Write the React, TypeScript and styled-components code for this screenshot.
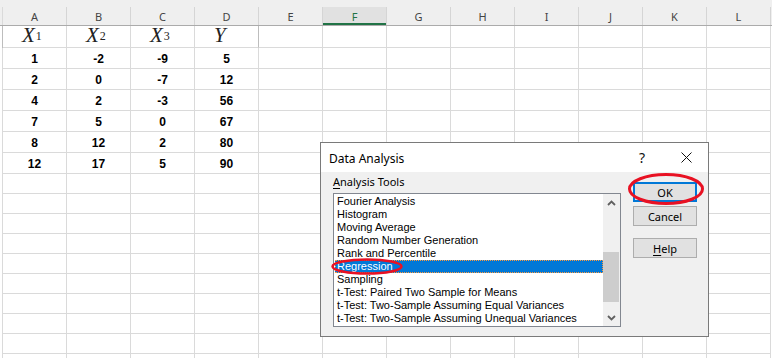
import React from "react";
import styled, { createGlobalStyle, css } from "styled-components";

const Global = createGlobalStyle`
  html, body { margin: 0; padding: 0; background: #ffffff; overflow: hidden; }
  #root { width: 772px; height: 358px; }
`;

const UI = `"Noto Sans", "Open Sans", "Liberation Sans", sans-serif`;
const LIST = `"Liberation Sans", Arial, sans-serif`;
const GRID = "#dadada";

const Sheet = styled.div`
  position: relative;
  width: 772px;
  height: 358px;
  overflow: hidden;
  background: #ffffff;
  font-family: ${UI};
`;

const TopStrip = styled.div`
  height: 7px;
  background: #efefef;
`;

const HeaderRow = styled.div`
  display: flex;
  height: 19px;
  background: #efefef;
  border-bottom: 1px solid #ababab;
  box-sizing: border-box;
`;

const Stub = styled.div<{ $dark?: boolean }>`
  flex: 0 0 3px;
  box-sizing: border-box;
  border-right: 1px solid ${(p) => (p.$dark ? "#bdbdbd" : GRID)};
`;

const ColHeader = styled.div<{ $selected?: boolean }>`
  flex: 0 0 64px;
  box-sizing: border-box;
  display: flex;
  align-items: center;
  justify-content: center;
  border-right: 1px solid #d5d5d5;
  font-size: 11px;
  color: #444444;
  ${(p) =>
    p.$selected &&
    css`
      background: #e1e1e1;
      color: #217346;
      box-shadow: inset 0 -2px 0 #217346;
    `}
`;

const Filler = styled.div`
  flex: 1;
`;

const Row = styled.div<{ $h: number }>`
  display: flex;
  height: ${(p) => p.$h}px;
`;

const Cell = styled.div<{ $dark?: boolean }>`
  flex: 0 0 64px;
  box-sizing: border-box;
  border-right: 1px solid ${(p) => (p.$dark ? "#bdbdbd" : GRID)};
  border-bottom: 1px solid ${GRID};
  display: flex;
  align-items: center;
  justify-content: center;
`;

const NumCell = styled(Cell)`
  font-family: "Liberation Sans", Arial, sans-serif;
  font-weight: bold;
  font-size: 12px;
  color: #000000;
  padding-top: 1px;
`;

const MathCell = styled(Cell)`
  justify-content: flex-start;
  padding-left: 19px;
  padding-bottom: 2px;
  font-family: "Liberation Serif", "Times New Roman", serif;
  font-style: italic;
  font-size: 21px;
  color: #222222;
  line-height: 1;
  sub {
    font-style: normal;
    font-size: 12px;
    line-height: 1;
    vertical-align: -2px;
    margin-left: 1px;
  }
`;

/* ---------- Dialog ---------- */

const Dialog = styled.div`
  position: absolute;
  left: 320px;
  top: 142px;
  width: 389px;
  height: 195px;
  box-sizing: border-box;
  border: 1px solid #7a7a7a;
  background: #f0f0f0;
  display: flex;
  flex-direction: column;
  font-family: ${UI};
`;

const TitleBar = styled.div`
  height: 29px;
  background: #ffffff;
  display: flex;
  align-items: center;
  padding-left: 8px;
  font-size: 12px;
  color: #000000;
`;

const Title = styled.div`
  flex: 1;
  padding-top: 1px;
`;

const TitleBtn = styled.div`
  width: 44px;
  height: 29px;
  display: flex;
  align-items: center;
  justify-content: center;
  font-size: 14px;
  color: #111111;
`;

const Body = styled.div`
  flex: 1;
  display: flex;
  padding: 0 10px 0 12px;
`;

const LeftCol = styled.div`
  width: 288px;
  display: flex;
  flex-direction: column;
  padding-top: 2px;
`;

const Label = styled.div`
  font-size: 11px;
  line-height: 15px;
  height: 15px;
  color: #000000;
  u { text-decoration: underline; text-underline-offset: 2px; }
`;

const ListBox = styled.div`
  margin-top: 4px;
  height: 134px;
  box-sizing: border-box;
  border: 1px solid #828790;
  background: #ffffff;
  display: flex;
`;

const Items = styled.div`
  flex: 1;
  padding-top: 1px;
  display: flex;
  flex-direction: column;
`;

const Item = styled.div<{ $selected?: boolean }>`
  height: 13px;
  line-height: 13px;
  font-family: ${LIST};
  font-size: 11px;
  padding-left: 2px;
  margin-left: 1px;
  white-space: nowrap;
  color: #000000;
  box-sizing: border-box;
  ${(p) =>
    p.$selected &&
    css`
      background: #0078d7;
      color: #ffffff;
      outline: 1px dotted #ff9a3c;
      outline-offset: -1px;
    `}
`;

const ScrollBar = styled.div`
  width: 17px;
  background: #f0f0f0;
  display: flex;
  flex-direction: column;
`;

const ScrollArrow = styled.div`
  height: 17px;
  display: flex;
  align-items: center;
  justify-content: center;
`;

const Track = styled.div`
  flex: 1;
  position: relative;
`;

const Thumb = styled.div<{ $top: number; $h: number }>`
  position: absolute;
  left: 0;
  right: 1px;
  top: ${(p) => p.$top}px;
  height: ${(p) => p.$h}px;
  background: #cdcdcd;
`;

const RightCol = styled.div`
  margin-left: 12px;
  padding-top: 10px;
  display: flex;
  flex-direction: column;
`;

const Button = styled.div<{ $default?: boolean; $gap?: number }>`
  width: 64px;
  height: 20px;
  box-sizing: border-box;
  margin-top: ${(p) => p.$gap ?? 0}px;
  background: #e1e1e1;
  border: 1px solid ${(p) => (p.$default ? "#0078d7" : "#adadad")};
  ${(p) => p.$default && css`box-shadow: inset 0 0 0 1px #0078d7;`}
  display: flex;
  align-items: center;
  justify-content: center;
  font-size: 11px;
  color: #000000;
  u { text-decoration: underline; text-underline-offset: 2px; }
`;

const Annotation = styled.svg<{ $x: number; $y: number }>`
  position: absolute;
  left: ${(p) => p.$x}px;
  top: ${(p) => p.$y}px;
  overflow: visible;
`;

const cols = ["A", "B", "C", "D", "E", "F", "G", "H", "I", "J", "K", "L"];
const data = [
  [1, -2, -9, 5],
  [2, 0, -7, 12],
  [4, 2, -3, 56],
  [7, 5, 0, 67],
  [8, 12, 2, 80],
  [12, 17, 5, 90],
];

const tools = [
  "Fourier Analysis",
  "Histogram",
  "Moving Average",
  "Random Number Generation",
  "Rank and Percentile",
  "Regression",
  "Sampling",
  "t-Test: Paired Two Sample for Means",
  "t-Test: Two-Sample Assuming Equal Variances",
  "t-Test: Two-Sample Assuming Unequal Variances",
];

const Chevron = ({ down }: { down?: boolean }) => (
  <svg width="9" height="6" viewBox="0 0 9 6">
    <path
      d={down ? "M1 1 L4.5 4.5 L8 1" : "M1 5 L4.5 1.5 L8 5"}
      fill="none"
      stroke="#606060"
      strokeWidth="1.8"
    />
  </svg>
);

const CloseIcon = () => (
  <svg width="11" height="11" viewBox="0 0 11 11">
    <path d="M0.5 0.5 L10.5 10.5 M10.5 0.5 L0.5 10.5" stroke="#111" strokeWidth="1" />
  </svg>
);

export default function App() {
  const emptyRows = Array.from({ length: 10 });
  return (
    <>
      <Global />
      <Sheet>
        <TopStrip />
        <HeaderRow>
          <Stub />
          {cols.map((c) => (
            <ColHeader key={c} $selected={c === "F"}>
              {c}
            </ColHeader>
          ))}
          <Filler />
        </HeaderRow>
        <Row $h={22}>
          <Stub $dark />
          <MathCell>
            X<sub>1</sub>
          </MathCell>
          <MathCell>
            X<sub>2</sub>
          </MathCell>
          <MathCell>
            X<sub>3</sub>
          </MathCell>
          <MathCell $dark>Y</MathCell>
          {cols.slice(4).map((c) => (
            <Cell key={c} />
          ))}
          <Filler />
        </Row>
        {data.map((r, i) => (
          <Row $h={21} key={i}>
            <Stub />
            {r.map((v, j) => (
              <NumCell key={j}>{v}</NumCell>
            ))}
            {cols.slice(4).map((c) => (
              <Cell key={c} />
            ))}
            <Filler />
          </Row>
        ))}
        {emptyRows.map((_, i) => (
          <Row $h={20} key={"e" + i}>
            <Stub />
            {cols.map((c) => (
              <Cell key={c} />
            ))}
            <Filler />
          </Row>
        ))}

        <Dialog>
          <TitleBar>
            <Title>Data Analysis</Title>
            <TitleBtn>?</TitleBtn>
            <TitleBtn>
              <CloseIcon />
            </TitleBtn>
          </TitleBar>
          <Body>
            <LeftCol>
              <Label>
                <u>A</u>nalysis Tools
              </Label>
              <ListBox>
                <Items>
                  {tools.map((t) => (
                    <Item key={t} $selected={t === "Regression"}>
                      {t}
                    </Item>
                  ))}
                </Items>
                <ScrollBar>
                  <ScrollArrow>
                    <Chevron />
                  </ScrollArrow>
                  <Track>
                    <Thumb $top={41} $h={50} />
                  </Track>
                  <ScrollArrow>
                    <Chevron down />
                  </ScrollArrow>
                </ScrollBar>
              </ListBox>
            </LeftCol>
            <RightCol>
              <Button $default>OK</Button>
              <Button $gap={4}>Cancel</Button>
              <Button $gap={12}>
                <u>H</u>elp
              </Button>
            </RightCol>
          </Body>
        </Dialog>

        <Annotation $x={628} $y={173} width="76" height="32">
          <ellipse cx="38" cy="16" rx="36.5" ry="14.5" fill="none" stroke="#e81123" strokeWidth="3" />
        </Annotation>
        <Annotation $x={331} $y={258} width="72" height="17">
          <ellipse cx="36" cy="8.5" rx="34.5" ry="7" fill="none" stroke="#e81123" strokeWidth="2.5" />
        </Annotation>
      </Sheet>
    </>
  );
}
